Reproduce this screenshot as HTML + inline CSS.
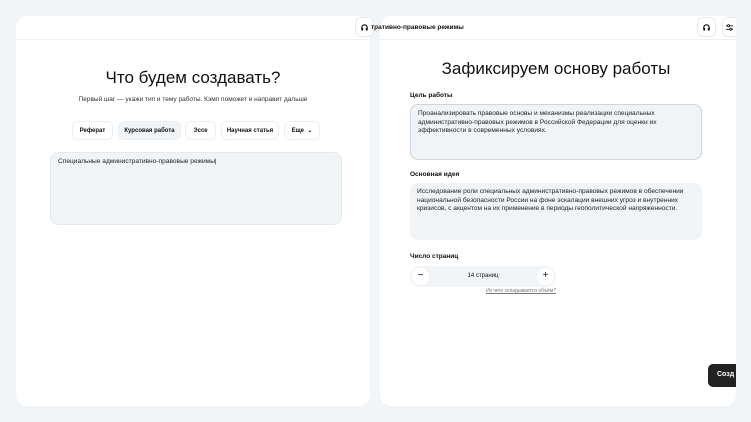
<!DOCTYPE html><html><head><meta charset="utf-8"><style>
*{box-sizing:border-box;margin:0;padding:0}
body{width:751px;height:422px;background:#f1f5f8;font-family:"Liberation Sans",sans-serif;color:#111;position:relative;overflow:hidden}
.card{position:absolute;background:#fff;border-radius:12px;top:16px;height:390px}
.hl{position:absolute;left:0;right:0;top:23px;height:1px;background:#eef1f4}
.ib{position:absolute;width:19px;height:20px;border:1px solid #e6eaee;border-radius:6px;background:#fff;display:flex;align-items:center;justify-content:center}
.t{position:absolute;white-space:nowrap}
.chip{position:absolute;top:105px;height:19px;border:1px solid #eceff2;border-radius:6px;font-size:6px;font-weight:bold;display:flex;align-items:center;justify-content:center;background:#fff}
.box{position:absolute;background:#f1f4f7;border-radius:8px;font-size:6.6px;line-height:8.6px;padding:5px 7px;color:#222}
.lab{position:absolute;font-size:6.5px;font-weight:bold;left:30px}
</style></head><body>
<div class="card" style="left:16px;width:354px">
<div class="hl"></div>
<div class="ib" style="left:339px;top:1px"><svg width="9" height="9" viewBox="0 0 10 10"><path d="M2 7V5a3 3 0 0 1 6 0v2" fill="none" stroke="#111" stroke-width="1.3"/><rect x="1.5" y="5.5" width="2" height="3" rx=".7" fill="#111"/><rect x="6.5" y="5.5" width="2" height="3" rx=".7" fill="#111"/></svg></div>
<div class="t" style="left:0;width:354px;text-align:center;top:52px;font-size:17px">Что будем создавать?</div>
<div class="t" style="left:0;width:354px;text-align:center;top:80px;font-size:6.5px;color:#333">Первый шаг — укажи тип и тему работы. Кэмп поможет и направит дальше</div>
<div class="chip" style="left:56px;width:41px">Реферат</div>
<div class="chip" style="left:102px;width:63px;background:#f1f4f7">Курсовая работа</div>
<div class="chip" style="left:169px;width:31px">Эссе</div>
<div class="chip" style="left:205px;width:58px">Научная статья</div>
<div class="chip" style="left:268px;width:36px">Еще&nbsp;&nbsp;⌄</div>
<div class="box" style="left:34px;top:136px;width:292px;height:73px;border:1px solid #e4e9ee;padding-top:5px">Специальные административно-правовые режимы|</div>
</div>
<div class="card" style="left:380px;width:356px;overflow:visible">
<div class="hl"></div>
<div class="t" style="left:-9px;top:8px;font-size:6.5px;font-weight:bold">тративно-правовые режимы</div>
<div class="ib" style="left:317px;top:1px"><svg width="9" height="9" viewBox="0 0 10 10"><path d="M2 7V5a3 3 0 0 1 6 0v2" fill="none" stroke="#111" stroke-width="1.3"/><rect x="1.5" y="5.5" width="2" height="3" rx=".7" fill="#111"/><rect x="6.5" y="5.5" width="2" height="3" rx=".7" fill="#111"/></svg></div>
<div class="ib" style="left:342px;top:1px;width:14px;border-right:none;border-radius:6px 0 0 6px;justify-content:flex-start;padding-left:3px"><svg width="7" height="7" viewBox="0 0 8 8"><path d="M0 2h8M0 6h8" stroke="#111" stroke-width="1"/><circle cx="3" cy="2" r="1.2" fill="#fff" stroke="#111"/><circle cx="5.5" cy="6" r="1.2" fill="#fff" stroke="#111"/></svg></div>
<div class="t" style="left:0;width:352px;text-align:center;top:43px;font-size:17px">Зафиксируем основу работы</div>
<div class="lab" style="top:76px">Цель работы</div>
<div class="box" style="left:30px;top:88px;width:292px;height:56px;border:1px solid #cdd4dc;padding-right:14px">Проанализировать правовые основы и механизмы реализации специальных административно-правовых режимов в Российской Федерации для оценки их эффективности в современных условиях.</div>
<div class="lab" style="top:155px">Основная идея</div>
<div class="box" style="left:30px;top:167px;width:292px;height:57px">Исследование роли специальных административно-правовых режимов в обеспечении национальной безопасности России на фоне эскалации внешних угроз и внутренних кризисов, с акцентом на их применение в периоды геополитической напряженности.</div>
<div class="lab" style="top:237px">Число страниц</div>
<div style="position:absolute;left:30px;top:250px;width:146px;height:21px;background:#f1f4f7;border-radius:11px">
<div style="position:absolute;left:2px;top:2px;width:17px;height:17px;border-radius:50%;background:#fff;text-align:center;font-size:10px;line-height:16px">−</div>
<div class="t" style="left:0;width:146px;text-align:center;top:7px;font-size:6px">14 страниц</div>
<div style="position:absolute;right:2px;top:2px;width:17px;height:17px;border-radius:50%;background:#fff;text-align:center;font-size:10px;line-height:16px">+</div>
</div>
<div class="t" style="left:96px;width:80px;text-align:right;top:272px;font-size:5px;color:#777;text-decoration:underline">Из чего складывается объём?</div>
<div style="position:absolute;left:328px;top:348px;width:28px;height:23px;background:#222;border-radius:5px 0 0 5px;color:#fff;font-size:7px;font-weight:bold;padding:7px 0 0 9px;overflow:hidden;white-space:nowrap">Созд</div>
</div>
</body></html>
